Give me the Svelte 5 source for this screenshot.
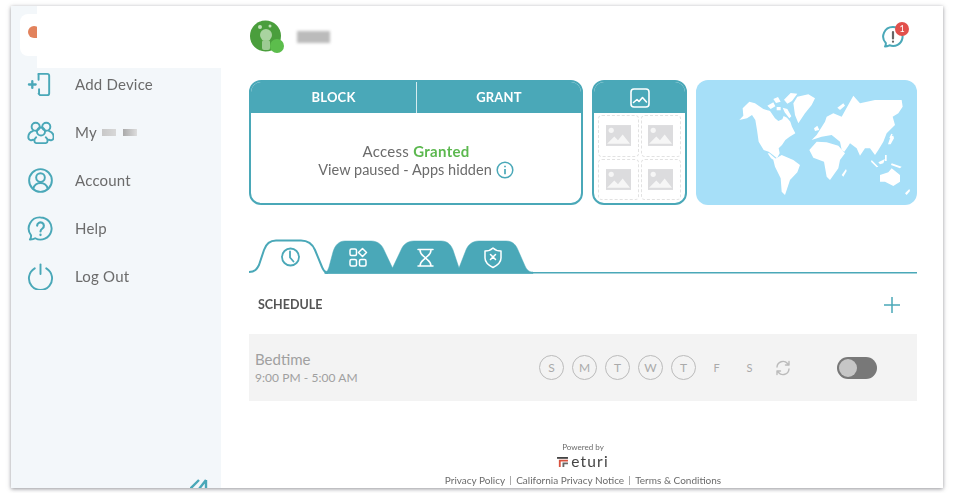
<script>
  const menu = [
    { id: 'add', label: 'Add Device' },
    { id: 'family', label: 'My', redacted: true },
    { id: 'account', label: 'Account' },
    { id: 'help', label: 'Help' },
    { id: 'logout', label: 'Log Out' }
  ];
  const days = [
    { d: 'S', on: true },
    { d: 'M', on: true },
    { d: 'T', on: true },
    { d: 'W', on: true },
    { d: 'T', on: true },
    { d: 'F', on: false },
    { d: 'S', on: false }
  ];
  const thumbs = [0, 1, 2, 3];
</script>

<div class="window">
  <aside class="sidebar">
    <div class="brand">
      <div class="brand-card"><span class="brand-dot"></span></div>
      <div class="brand-blank"></div>
    </div>
    <nav class="menu">
      {#each menu as item}
        <div class="menu-item">
          <svg class="menu-icon" viewBox="0 0 28 28" fill="none" stroke="#4aa8b8" stroke-width="2" stroke-linecap="round" stroke-linejoin="round">
            {#if item.id === 'add'}
              <path d="M12 3h9a2 2 0 0 1 2 2v18a2 2 0 0 1-2 2h-7.500l-1.500-1.500" />
              <path d="M12 3v6M12.500 19v4" />
              <path d="M2 14h7M5.500 10.500v7" stroke-width="2.400" />
            {:else if item.id === 'family'}
              <circle cx="9" cy="8" r="4.200" />
              <circle cx="20" cy="8" r="4.200" />
              <circle cx="14.500" cy="13" r="4.200" />
              <path d="M6 12.500c-3 1-5 4-4.500 7.500.5 2 3 2.500 5 1.500M23 12.500c3 1 5 4 4.500 7.500-.5 2-3 2.500-5 1.500M9.500 19c-2.500 2-2.500 5.500 0 6h10c2.500-.5 2.500-4 0-6" />
            {:else if item.id === 'account'}
              <circle cx="14" cy="14" r="11.800" />
              <circle cx="14" cy="11" r="4.500" />
              <path d="M6.500 22.500c1-4 4-6 7.500-6s6.500 2 7.500 6" />
            {:else if item.id === 'help'}
              <path d="M14 2.500a11.500 11.500 0 1 1-5.500 21.600c-1.500 1-3.500 1.400-5.500 1.300 1-1.200 1.400-2.600 1.200-4.400A11.500 11.500 0 0 1 14 2.500z" />
              <path d="M10.500 11a3.500 3.500 0 1 1 5.500 3c-1.300.9-2 1.500-2 3" stroke-width="2.200" />
              <path d="M14 20.500v.3" stroke-width="2.400" />
            {:else}
              <path d="M8 5.500a12 12 0 1 0 12 0" />
              <path d="M14 1.500v10" />
            {/if}
          </svg>
          <span class="menu-label">{item.label}</span>
          {#if item.redacted}
            <span class="smudge"></span><span class="smudge dark"></span>
          {/if}
        </div>
      {/each}
    </nav>
    <svg class="collapse" viewBox="0 0 18 10" fill="none" stroke="#4aa8b8" stroke-width="2.400">
      <path d="M0 11 9 2M9 11 16 2M16 2v9" />
    </svg>
  </aside>

  <main class="main">
    <header class="top">
      <div class="avatar">
        <svg viewBox="0 0 34 34">
          <circle cx="15.500" cy="16" r="15.500" fill="#4a9e3c" />
          <circle cx="16" cy="15" r="6" fill="#a9d3a0" />
          <rect x="12" y="20" width="8" height="10" rx="2" fill="#9ccb93" />
          <circle cx="10" cy="7" r="2" fill="#bfe0b8" />
          <circle cx="20" cy="6" r="1.500" fill="#bfe0b8" />
          <circle cx="27" cy="26" r="7" fill="#5cbd4c" />
        </svg>
      </div>
      <div class="name-blur"></div>
      <div class="alert">
        <svg viewBox="0 0 24 24" fill="none" stroke="#4aa8b8" stroke-width="2" stroke-linecap="round" stroke-linejoin="round">
          <path d="M11 2a9.500 9.500 0 1 1-3.500 18.300C6 21 4.500 21.500 3 21.500c.7-1 1-2.200.8-3.500A9.500 9.500 0 0 1 11 2z" />
          <path d="M11 7v6.500M11 16.500v.2" stroke="#666" stroke-width="2.200" />
        </svg>
        <span class="badge">1</span>
      </div>
    </header>

    <section class="cards">
      <div class="card access">
        <div class="card-head split">
          <span>BLOCK</span>
          <span>GRANT</span>
        </div>
        <div class="access-body">
          <div class="status">Access <b>Granted</b></div>
          <div class="note">
            View paused - Apps hidden
            <svg class="info" viewBox="0 0 18 18" fill="none" stroke="#4aa8b8" stroke-width="1.500">
              <circle cx="9" cy="9" r="7.800" />
              <path d="M9 8v5.200M9 4.800v1.400" stroke-width="1.700" />
            </svg>
          </div>
        </div>
      </div>

      <div class="card gallery">
        <div class="card-head">
          <svg class="gallery-icon" viewBox="0 0 20 20" fill="none" stroke="#fff" stroke-width="1.600" stroke-linejoin="round" stroke-linecap="round">
            <rect x="1" y="1" width="18" height="18" rx="3" />
            <path d="M3.500 14.500l3.500-3 2 2 3.500-4 4 4.500" />
          </svg>
        </div>
        <div class="thumbs">
          {#each thumbs as t}
            <div class="thumb">
              <svg viewBox="0 0 24 20">
                <rect width="24" height="20" fill="#dcdcde" />
                <circle cx="5" cy="5" r="2.500" fill="#f6f6f6" />
                <path d="M1 18l7-7 3.500 3.500L16 9l7 9z" fill="#f6f6f6" />
              </svg>
            </div>
          {/each}
        </div>
      </div>

      <div class="map">
        <svg viewBox="-42 -15 663 375" fill="#fff">
          <path d="M88 105l12-13-2-22 20-20 17 5 25 17 20 6 15 22 10 8 12-5 4-10 10 5 10 12 5 15 10 20-17 10-13 10-10 15-10 10 3 15-8 15-12-10-13-10-15-5-15-25-5-35-5-30-10-15-15 10z" />
          <path d="M178 205l12 10 15 12-4 5-18-12-10-15z" />
          <path d="M190 225l25-15 35 15 20 15-8 22-22 23-15 45-10-10-3-40-17-35z" />
          <path d="M250 55l12-20 33-7 20 12-10 20-20 25-20 30-10-25z" />
          <path d="M172 62l18-10 6 12-14 8zM190 42l14-6 8 14-14 4zM222 44l20-20 20 2-16 22-14 8zM200 66h12v10h-12zM218 68l14 4 12 22-6 6-14-18z" />
          <path d="M382 68l18-13 5 7-15 13z" />
          <path d="M320 150l25-40 5-15 20-10 25 10 35-63 20 23 45-10h80l3 20-13 20-17 10 7 25-25 25-10 25-15 25-10 15-15-20h-15l-15 22-10-22-20-15-5 8-12 17-8-5-5-25-25-20-30 5-30 10z" />
          <path d="M534 178l8-24 8-2 2 8-10 18zM538 158l6-12 4 2-6 12z" />
          <path d="M312 130l10-8 6 13-13 3z" />
          <path d="M298 195l22-25 30 2 35 10 20 23-15 20-5 25-25 35-10-10-8-45-32-12z" />
          <path d="M395 270l13-18 2 6-10 17z" />
          <path d="M510 270l25-8 10-12 25 20v20l-20 13-25-13h-15z" />
          <path d="M485 225l20 20-5 2-17-17zM505 232l20-10-5 13-10 3zM525 210h5v18h-5zM545 235l30 10-5 5-27-10z" />
          <path d="M585 325l13-13 2 6-10 12z" />
        </svg>
      </div>
    </section>

    <section class="tabs">
      <svg viewBox="0 0 668 36" fill="none" stroke-linecap="round" stroke-linejoin="round">
        <path d="M76 33H668V34.500H76z" fill="#4aa8b8" />
        <path d="M76 33C78 33 79 31 80 28L84 13C86 6 90 2 96 2H122C129 2 133 6 135 11L143.500 29 152 11C154 6 158 2 165 2H192C199 2 202 6 204 11L210 29 217 11C219 6 223 2 230 2H257C264 2 267 6 269 11L276 27C278 31 280 33 284 33V34.500H76Z" fill="#4aa8b8" stroke="#4aa8b8" stroke-width="0.500" />
        <path d="M0 33C6 33 8 30 10 26L15 11C17 5 20 1.500 27 1.500H52C59 1.500 63 4 66 11L73 28C74 31 76 33 78 34" stroke="#4aa8b8" stroke-width="2" />
        <g stroke="#4aa8b8" stroke-width="1.800">
          <circle cx="41.500" cy="18" r="8.500" />
          <path d="M41 12.500v6l3.500 4" />
        </g>
        <g stroke="#fff" stroke-width="1.500">
          <rect x="101" y="10" width="6.500" height="6.500" rx="1.500" />
          <path d="M113.500 9.500l4 4-4 4-4-4z" />
          <rect x="101" y="20.500" width="6.500" height="6.500" rx="1.500" />
          <rect x="110.500" y="20.500" width="6.500" height="6.500" rx="1.500" />
          <path d="M169 10.500h15M169 27h15M171 11c0 5 4 6 5.500 8-1.500 2-5.500 3-5.500 8M182 11c0 5-4 6-5.500 8 1.500 2 5.500 3 5.500 8" />
          <path d="M236 12c3.500 0 6-1 8-3 2 2 4.500 3 8 3v7c0 4-3 7-8 9.500-5-2.500-8-5.500-8-9.500z" />
          <path d="M241.500 15.500l5 5M246.500 15.500l-5 5" />
        </g>
      </svg>
    </section>

    <div class="schedule-head">
      <h2>SCHEDULE</h2>
      <svg class="plus" viewBox="0 0 16 16" stroke="#4aa8b8" stroke-width="1.500"><path d="M8 0v16M0 8h16" /></svg>
    </div>

    <div class="rule">
      <div class="rule-text">
        <div class="rule-name">Bedtime</div>
        <div class="rule-time">9:00 PM - 5:00 AM</div>
      </div>
      <div class="days">
        {#each days as day}
          <span class="day" class:on={day.on}>{day.d}</span>
        {/each}
        <svg class="repeat" viewBox="0 0 16 16" fill="none" stroke="#bbb" stroke-width="1.400" stroke-linecap="round" stroke-linejoin="round">
          <path d="M2 7a6 6 0 0 1 10.500-3.500L14 5M14 1.500V5h-3.500M14 9a6 6 0 0 1-10.500 3.500L2 11M2 14.500V11h3.500" />
        </svg>
      </div>
      <div class="toggle"><span class="knob"></span></div>
    </div>

    <footer class="footer">
      <div class="powered">Powered by</div>
      <div class="logo">
        <svg viewBox="0 0 12 11"><path d="M0 0h12v2H0z" fill="#444" /><path d="M2 3h10v2H4v6H2z" fill="#d9533f" /><path d="M6 6h6v2H8v3H6z" fill="#666" /></svg>
        <span>eturi</span>
      </div>
      <div class="links">
        <span>Privacy Policy</span><i></i><span>California Privacy Notice</span><i></i><span>Terms &amp; Conditions</span>
      </div>
    </footer>
  </main>
</div>

<style>
  :global(body) {
    margin: 0;
    min-height: 493px;
    background: #fff;
    font-family: Lato, "Open Sans", sans-serif;
    overflow: hidden;
  }
  .window {
    display: flex;
    width: 932px;
    height: 482px;
    margin: 6px 11px 0;
    background: #fff;
    box-shadow: 0 1px 4px rgba(60, 60, 70, 0.55);
    overflow: hidden;
    filter: blur(0.3px);
  }
  .sidebar {
    position: relative;
    flex: none;
    width: 210px;
    background: #f3f7fa;
  }
  .brand {
    display: flex;
    height: 62px;
    margin-left: 9px;
  }
  .brand-card {
    width: 17px;
    height: 42px;
    margin-top: 8px;
    background: #fff;
    border-radius: 8px 0 0 8px;
    overflow: hidden;
  }
  .brand-dot {
    display: block;
    width: 12px;
    height: 12px;
    margin: 12px 0 0 8px;
    background: #e2825c;
    border-radius: 50% 50% 20% 50%;
  }
  .brand-blank {
    flex: 1;
    background: #fff;
  }
  .menu {
    display: flex;
    flex-direction: column;
    gap: 16px;
  }
  .menu-item {
    display: flex;
    align-items: center;
    height: 32px;
    padding-left: 16px;
    color: #6b6b6b;
    font-size: 15px;
    letter-spacing: 0.2px;
  }
  .menu-icon {
    flex: none;
    width: 27px;
    height: 27px;
    margin-right: 21px;
  }
  .menu-label {
    margin-top: -1px;
  }
  .smudge {
    width: 14px;
    height: 7px;
    margin-left: 5px;
    background: linear-gradient(90deg, #c8c8c8, #d8d8d8);
    filter: blur(0.6px);
  }
  .smudge.dark {
    margin-left: 7px;
    background: linear-gradient(90deg, #aaa, #ddd);
  }
  .collapse {
    position: absolute;
    right: 13px;
    bottom: 0;
    width: 18px;
    height: 10px;
  }
  .main {
    flex: 1;
    min-width: 0;
    display: flex;
    flex-direction: column;
    padding: 0 26px 0 28px;
    color: #6b6b6b;
  }
  .top {
    display: flex;
    align-items: center;
    box-sizing: border-box;
    height: 74px;
    padding-bottom: 12px;
  }
  .avatar {
    width: 34px;
    height: 34px;
    margin-left: 1px;
  }
  .avatar svg {
    display: block;
    width: 34px;
    height: 34px;
  }
  .name-blur {
    width: 33px;
    height: 12px;
    margin-left: 13px;
    background: #bbb;
    filter: blur(1.5px);
  }
  .alert {
    position: relative;
    width: 24px;
    height: 24px;
    margin-left: auto;
    margin-right: 11px;
  }
  .alert svg {
    display: block;
  }
  .badge {
    position: absolute;
    top: -3px;
    right: -3px;
    width: 14px;
    height: 14px;
    border-radius: 50%;
    background: #e2504c;
    color: #fff;
    font-size: 9px;
    line-height: 14px;
    text-align: center;
  }
  .cards {
    display: flex;
    gap: 9px;
    height: 125px;
  }
  .card {
    display: flex;
    flex-direction: column;
    box-sizing: border-box;
    border: 2px solid #4aa8b8;
    border-radius: 12px;
    overflow: hidden;
  }
  .access {
    width: 334px;
  }
  .gallery {
    width: 95px;
  }
  .card-head {
    flex: none;
    display: flex;
    align-items: center;
    justify-content: center;
    height: 31px;
    background: #4aa8b8;
    color: #fff;
    font-size: 13px;
    font-weight: 700;
    letter-spacing: 0.2px;
  }
  .split span {
    flex: 1;
    line-height: 31px;
    text-align: center;
  }
  .split span:first-child {
    flex: 0 0 165px;
    border-right: 1px solid #d6ecef;
  }
  .access-body {
    flex: 1;
    display: flex;
    flex-direction: column;
    align-items: center;
    justify-content: center;
    padding-top: 5px;
    font-size: 15px;
  }
  .status {
    line-height: 19px;
    letter-spacing: 0.3px;
  }
  .status b {
    color: #5cb84f;
    font-weight: 700;
  }
  .note {
    display: flex;
    align-items: center;
    gap: 4px;
    line-height: 18px;
    font-size: 14.5px;
    letter-spacing: 0.02px;
  }
  .info {
    width: 18px;
    height: 18px;
  }
  .gallery-icon {
    width: 20px;
    height: 20px;
  }
  .thumbs {
    flex: 1;
    display: grid;
    grid-template-columns: 1fr 1fr;
    grid-template-rows: 1fr 1fr;
    gap: 2px;
    padding: 2px 4px 3px;
  }
  .thumb {
    display: flex;
    align-items: center;
    justify-content: center;
    border: 1px dashed #e2e2e2;
    border-radius: 4px;
  }
  .thumb svg {
    display: block;
    width: 25px;
    height: 21px;
  }
  .map {
    flex: 1;
    background: #a6dff8;
    border-radius: 12px;
    overflow: hidden;
  }
  .map svg {
    display: block;
    width: 100%;
    height: 100%;
  }
  .tabs {
    height: 36px;
    margin-top: 34px;
  }
  .tabs svg {
    display: block;
    width: 668px;
    height: 36px;
  }
  .schedule-head {
    display: flex;
    align-items: center;
    justify-content: space-between;
    height: 59px;
    padding: 0 17px 0 9px;
  }
  h2 {
    margin: 0;
    color: #555;
    font-size: 12.5px;
    font-weight: 700;
  }
  .plus {
    width: 16px;
    height: 16px;
  }
  .rule {
    display: flex;
    align-items: center;
    height: 67px;
    background: #f3f3f3;
    padding: 0 40px 0 6px;
    color: #a0a0a0;
  }
  .rule-text {
    width: 284px;
  }
  .rule-name {
    font-size: 15px;
    line-height: 20px;
  }
  .rule-time {
    font-size: 12px;
    line-height: 18px;
    letter-spacing: 0.05px;
  }
  .days {
    display: flex;
    align-items: center;
    gap: 8px;
    color: #aaa;
    font-size: 11px;
  }
  .day {
    width: 25px;
    height: 25px;
    box-sizing: border-box;
    line-height: 23px;
    text-align: center;
    border: 1px solid transparent;
    border-radius: 50%;
  }
  .day.on {
    border-color: #bbb;
    font-size: 12px;
  }
  .repeat {
    width: 16px;
    height: 16px;
    margin-left: 5px;
  }
  .toggle {
    width: 40px;
    height: 22px;
    margin-left: auto;
    padding: 2px;
    box-sizing: border-box;
    background: #787878;
    border-radius: 11px;
  }
  .knob {
    display: block;
    width: 18px;
    height: 18px;
    background: #c6c6c6;
    border-radius: 50%;
  }
  .footer {
    display: flex;
    flex-direction: column;
    align-items: center;
    margin-top: auto;
    padding-bottom: 1px;
    color: #6b6b6b;
  }
  .powered {
    font-size: 8px;
    line-height: 9px;
  }
  .logo {
    display: flex;
    align-items: center;
    gap: 3px;
    height: 14px;
    margin: 2px 0 5px;
    color: #444;
    font-size: 15.5px;
    line-height: 14px;
    letter-spacing: 1.2px;
  }
  .logo svg {
    width: 11px;
    height: 10px;
    margin-top: 2px;
  }
  .links {
    display: flex;
    align-items: center;
    gap: 5px;
    font-size: 10px;
    line-height: 14px;
  }
  .links i {
    width: 1px;
    height: 9px;
    background: #aaa;
  }
</style>
